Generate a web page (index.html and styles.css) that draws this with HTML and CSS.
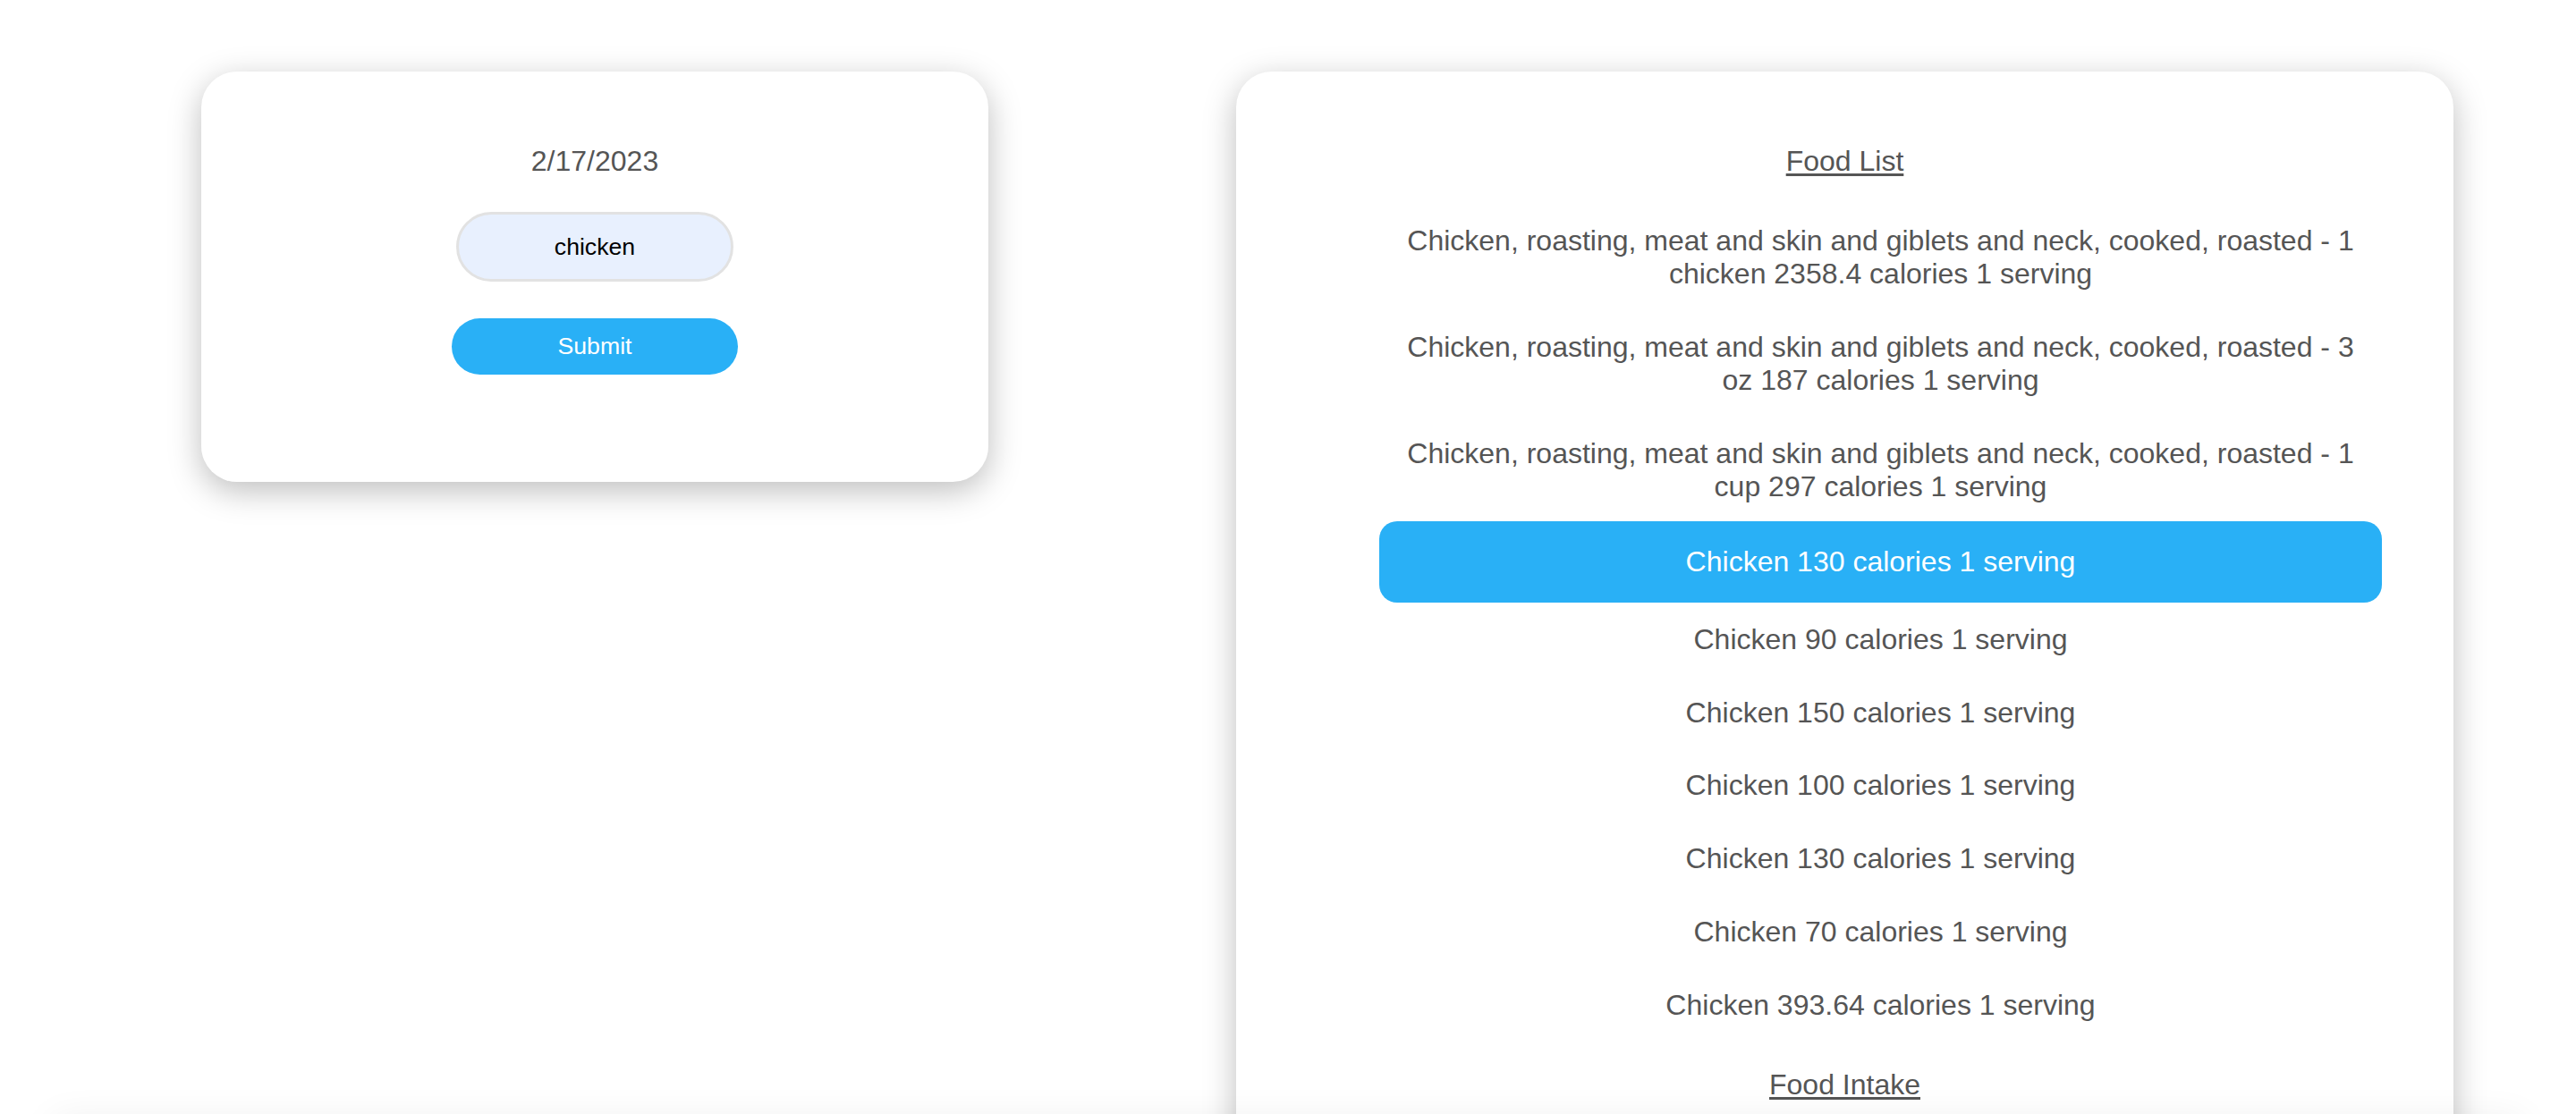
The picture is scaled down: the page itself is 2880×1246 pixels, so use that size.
FILE: index.html
```html
<!DOCTYPE html>
<html lang="en">
<head>
<meta charset="utf-8">
<title>Food Tracker</title>
<link rel="stylesheet" href="styles.css">
</head>
<body>
<main class="page">
  <section class="card form-card">
    <p class="date">2/17/2023</p>
    <input class="food-input" type="text" value="chicken">
    <button class="submit-btn" type="button">Submit</button>
  </section>
  <section class="card list-card">
    <h2 class="section-title">Food List</h2>
    <ul class="food-list">
      <li class="food-item">Chicken, roasting, meat and skin and giblets and neck, cooked, roasted - 1 chicken 2358.4 calories 1 serving</li>
      <li class="food-item">Chicken, roasting, meat and skin and giblets and neck, cooked, roasted - 3 oz 187 calories 1 serving</li>
      <li class="food-item">Chicken, roasting, meat and skin and giblets and neck, cooked, roasted - 1 cup 297 calories 1 serving</li>
      <li class="food-item is-selected">Chicken 130 calories 1 serving</li>
      <li class="food-item">Chicken 90 calories 1 serving</li>
      <li class="food-item">Chicken 150 calories 1 serving</li>
      <li class="food-item">Chicken 100 calories 1 serving</li>
      <li class="food-item">Chicken 130 calories 1 serving</li>
      <li class="food-item">Chicken 70 calories 1 serving</li>
      <li class="food-item">Chicken 393.64 calories 1 serving</li>
    </ul>
    <h2 class="section-title intake-title">Food Intake</h2>
  </section>
</main>
<footer class="band"></footer>
</body>
</html>
```
FILE: styles.css
```css
html, body {
  margin: 0;
  background: #ffffff;
}

body {
  font-family: "Liberation Sans", Arial, Helvetica, sans-serif;
  color: #555555;
}

.page {
  display: flex;
  align-items: flex-start;
  gap: 277px;
  padding: 80px 0 0 225px;
  height: 1252px;
  box-sizing: border-box;
}

.card {
  flex: none;
  background: #ffffff;
  border-radius: 40px;
  box-sizing: border-box;
  box-shadow: 0 10px 36px rgba(0, 0, 0, 0.26);
}

.form-card {
  width: 880px;
  height: 459px;
  padding-top: 82px;
  display: flex;
  flex-direction: column;
  align-items: center;
}

.date {
  margin: 0;
  font-size: 32px;
  line-height: 37px;
  color: #555555;
}

.food-input {
  display: block;
  margin-top: 38px;
  width: 310px;
  height: 78px;
  box-sizing: border-box;
  border: 3px solid #e2e2e2;
  border-radius: 39px;
  background: #e8f0fe;
  color: #000000;
  font-family: "Liberation Sans", Arial, Helvetica, sans-serif;
  font-size: 26.67px;
  text-align: center;
  outline: none;
  padding: 0 20px;
}

.submit-btn {
  display: block;
  margin-top: 41px;
  width: 320px;
  height: 63px;
  border: none;
  border-radius: 32px;
  background: #29b0f6;
  color: #ffffff;
  font-family: "Liberation Sans", Arial, Helvetica, sans-serif;
  font-size: 26.67px;
  padding: 0;
}

.list-card {
  width: 1361px;
  min-height: 1500px;
  padding: 82px 80px 0;
}

.section-title {
  margin: 0;
  font-size: 32px;
  line-height: 37px;
  font-weight: normal;
  text-align: center;
  color: #555555;
  text-decoration: underline;
  text-decoration-thickness: 3px;
  text-underline-offset: 3px;
}

.food-list {
  list-style: none;
  margin: 30px 0 0;
  padding: 0 0 0 80px;
}

.food-item {
  padding: 22.4px 22px;
  font-size: 32px;
  line-height: 37px;
  text-align: center;
  color: #555555;
  border-radius: 20px;
}

.food-item.is-selected {
  padding: 27px 22px;
  margin-top: -2px;
  background: #29b0f6;
  color: #ffffff;
}

.intake-title {
  margin-top: 30px;
}

.band {
  position: relative;
  z-index: 1;
  margin: 0 60px;
  height: 300px;
  background: #ffffff;
  box-shadow: 0 0 40px rgba(0, 0, 0, 0.07);
}
```
